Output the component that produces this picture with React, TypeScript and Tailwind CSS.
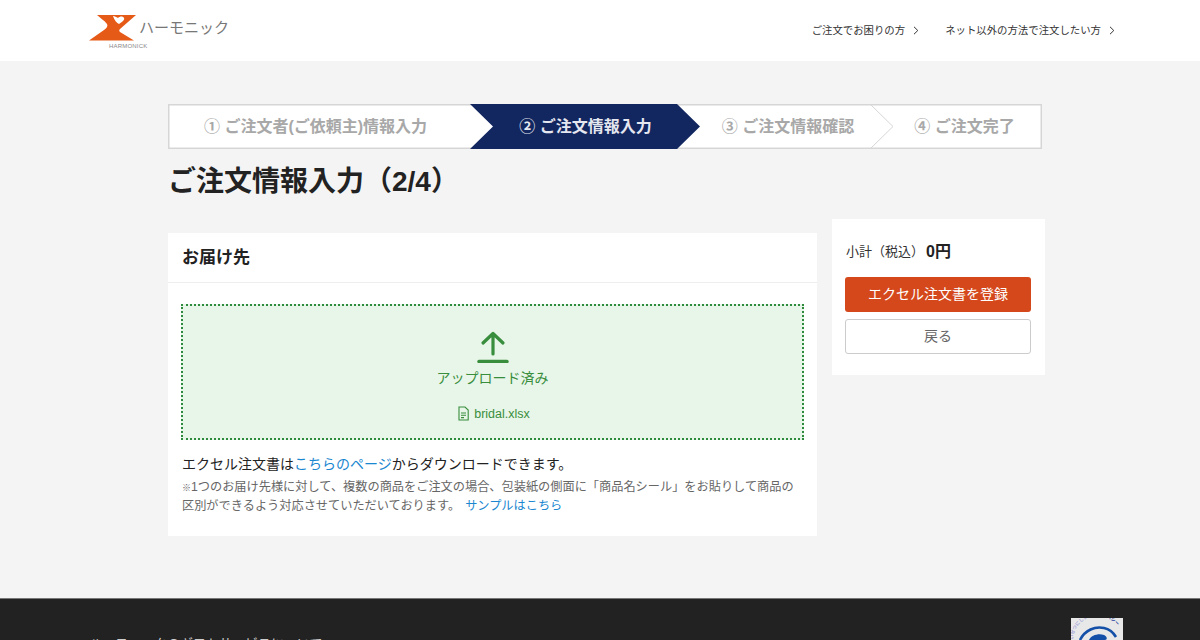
const font = { fontFamily: '"Liberation Sans","Noto Sans CJK JP",sans-serif' };

function Chevron() {
  return (
    <svg width="6" height="9" viewBox="0 0 6 9" fill="none" stroke="#333" strokeWidth="1" className="ml-2">
      <path d="M1 .8 4.8 4.5 1 8.2" />
    </svg>
  );
}

function Logo() {
  return (
    <div className="flex items-start">
      <div className="flex flex-col w-[48px]">
        <svg width="48" height="26" viewBox="0 0 48 26">
          <path d="M8 0H47L31 14C30 15 30 16 31 17L45 25.5H0L15 15C18 13 19 11 18 9 15 5 11 3 8 0Z" fill="#e65a17" />
          <path d="M24 1C25 5 28 8 30 9 33 7 36 5 35 3 34 1 31 1 29 3 27 2 26 1 24 1Z" fill="#fff" />
        </svg>
        <span className="ml-[20px] mt-[2px] text-[6px] leading-[7px] text-[#888] tracking-[0.2px] whitespace-nowrap">HARMONICK</span>
      </div>
      <span className="ml-[2px] mt-[1px] text-[15px] leading-[24px] text-[#777] whitespace-nowrap">ハーモニック</span>
    </div>
  );
}

function Step({ w, active, children }: { w: string; active?: boolean; children: string }) {
  return (
    <div className={`${w} flex items-center justify-center text-[16px] font-bold whitespace-nowrap ${active ? "text-[#e4e7ef]" : "text-[#a8a8a8]"}`}>
      {children}
    </div>
  );
}

export default function App() {
  return (
    <div style={font} className="h-[640px] overflow-hidden bg-[#f4f4f4] text-[#222]">
      <header className="h-[61px] bg-white flex items-center justify-between pl-[89px] pr-[85px]">
        <div className="mt-[4px]"><Logo /></div>
        <nav className="flex items-center gap-[26px] text-[10.4px] text-[#333] mt-[1px]">
          <a className="flex items-center">ご注文でお困りの方<Chevron /></a>
          <a className="flex items-center">ネット以外の方法で注文したい方<Chevron /></a>
        </nav>
      </header>

      <main className="w-[877px] ml-[168px] pt-[43px] h-[537px]">
        <div className="relative w-[874px] h-[45px] bg-white flex">
          <svg className="absolute inset-0" width="874" height="45" viewBox="0 0 874 45">
            <rect x=".75" y=".75" width="872.5" height="43.5" fill="#fff" stroke="#d6d6d6" strokeWidth="1.5" />
            <path d="M302 0H509L532 22.5 509 45H302L325 22.5Z" fill="#122660" />
            <path d="M702 0 725 22.5 702 45" fill="none" stroke="#d6d6d6" />
          </svg>
          <div className="relative flex w-full">
            <Step w="w-[295px]">① ご注文者(ご依頼主)情報入力</Step>
            <Step w="w-[245px]" active>② ご注文情報入力</Step>
            <Step w="w-[160px]">③ ご注文情報確認</Step>
            <Step w="w-[174px] pl-[19px]">④ ご注文完了</Step>
          </div>
        </div>

        <h1 className="mt-[13px] text-[28px] leading-[40px] font-bold">ご注文情報入力（2/4）</h1>

        <div className="mt-[17px] flex items-start gap-[15px]">
          <section className="mt-[14px] w-[649px] h-[303px] bg-white">
            <h2 className="h-[50px] border-b border-[#eeeeee] px-[14px] text-[17px] font-bold leading-[49px]">お届け先</h2>
            <div className="pl-[13px] pr-[13px] pt-[21px]">
              <div className="h-[136px] border-2 border-dotted border-[#2e8b3d] bg-[#e8f5e9] flex flex-col items-center text-[#388e3c]">
                <svg className="mt-[25px]" width="32" height="32" viewBox="0 0 32 32" fill="none" stroke="#388e3c" strokeLinecap="round" strokeLinejoin="round">
                  <path d="M16 23V2.5M6 12 16 2.5 26 12" strokeWidth="3.2" />
                  <path d="M2 30.5H30" strokeWidth="3.4" />
                </svg>
                <div className="mt-[5px] text-[14px] leading-[20px]">アップロード済み</div>
                <div className="mt-[17px] ml-[3px] flex items-center text-[12.5px] leading-[18px]">
                  <svg className="mr-[5px] mt-[-2px]" width="11" height="15" viewBox="0 0 11 15" fill="none" stroke="#388e3c" strokeWidth="1.1">
                    <path d="M1 1H7L10.2 4V14H1Z" />
                    <path d="M3 7H8M3 9.3H8M3 11.6H6" />
                  </svg>
                  bridal.xlsx
                </div>
              </div>
              <p className="mt-[14px] px-px text-[14px] leading-[20px] text-[#222]">
                エクセル注文書は<a className="text-[#1a87d0]">こちらのページ</a>からダウンロードできます。
              </p>
              <p className="mt-[4px] px-px text-[12.2px] leading-[18px] text-[#666]">
                <span className="text-[9px]">※</span>1つのお届け先様に対して、複数の商品をご注文の場合、包装紙の側面に「商品名シール」をお貼りして商品の区別ができるよう対応させていただいております。<a className="ml-[5px] text-[#1a87d0]">サンプルはこちら</a>
              </p>
            </div>
          </section>

          <aside className="w-[213px] h-[156px] bg-white pl-[13px] pr-[14px] pt-[22px]">
            <div className="flex items-center h-[21px] ml-px">
              <span className="text-[13px] text-[#333]">小計（税込）</span>
              <span className="ml-[2px] text-[16px] font-bold">0円</span>
            </div>
            <button className="mt-[15px] w-full h-[35px] rounded-[3px] bg-[#d4481c] text-white text-[14px]">エクセル注文書を登録</button>
            <button className="mt-[7px] w-full h-[35px] rounded-[3px] bg-white border border-[#cccccc] text-[#666] text-[14px]">戻る</button>
          </aside>
        </div>
      </main>

      <footer className="h-[42px] bg-[#222] border-t border-[#777] pl-[89px] pr-[77px] flex justify-between">
        <div className="pt-[36px] text-[13px] leading-[18px] text-[#ccc] whitespace-nowrap">ハーモニックのギフトサービスについて</div>
        <svg className="mt-[19px]" width="52" height="22" viewBox="0 0 52 22">
          <rect width="52" height="22" fill="#e8e8e8" />
          <path id="sealArc" d="M3 26A23 22 0 0 1 50 16" fill="none" />
          <text fontSize="4.6" fontWeight="700" style={font}>
            <textPath href="#sealArc">
              <tspan fill="#a6a6d8">たいせつにします</tspan>
              <tspan fill="#1a3f9e">プライバシー</tspan>
            </textPath>
          </text>
          <path d="M9 22C14 12 24 8 33 10 38 11 42 14 45 19" fill="none" stroke="#1450a8" strokeWidth="2.6" />
          <path d="M18 22C20 17 28 15 33 17 37 19 36 22 34 22Z" fill="#1450a8" />
        </svg>
      </footer>
    </div>
  );
}
